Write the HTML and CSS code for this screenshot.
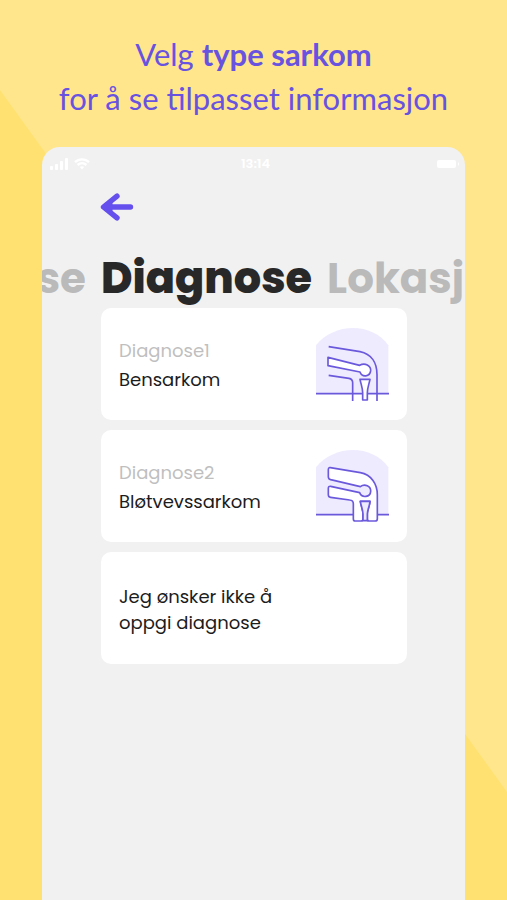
FILE: index.html
```html
<!DOCTYPE html>
<html lang="no">
<head>
<meta charset="utf-8">
<meta name="viewport" content="width=device-width, initial-scale=1">
<title>Diagnose</title>
<link rel="stylesheet" href="styles.css">
</head>
<body>
<div class="page">
  <h1 class="headline">Velg <strong>type sarkom</strong><br>for å se tilpasset informasjon</h1>
  <main class="phone">
    <div class="status">
      <div class="status-left">
        <svg width="18" height="12" viewBox="0 0 18 12" fill="#fff" aria-hidden="true"><rect x="0" y="8" width="3" height="4" rx="1"/><rect x="5" y="6" width="3" height="6" rx="1"/><rect x="10" y="3" width="3" height="9" rx="1"/><rect x="15" y="0" width="3" height="12" rx="1"/></svg>
        <svg width="16" height="12" viewBox="0 0 16 12" fill="none" stroke="#fff" stroke-width="2.4" aria-hidden="true"><path d="M1 4.2C5 .4 11 .4 15 4.2M3.6 7C6.200 4.700 9.800 4.700 12.400 7"/><path d="M8 11.500 5.800 9Q8 7.300 10.200 9Z" fill="#fff" stroke="none"/></svg>
      </div>
      <time class="clock">13:14</time>
      <svg class="battery" width="24" height="10" viewBox="0 0 24 10" fill="#fff" aria-hidden="true"><rect x="0" y="1" width="19" height="8" rx="2"/><path d="M21 3q2 2 0 4z"/></svg>
    </div>
    <button class="back" type="button" aria-label="Tilbake">
      <svg width="34" height="28" viewBox="0 0 34 28" fill="none" stroke="#6550ee" stroke-width="5.400" stroke-linecap="round" stroke-linejoin="round" aria-hidden="true"><path d="M30.500 14H4M17 3.200 3.500 14 17 24.800"/><path d="M11 10.500 6 14l5 3.500z" fill="#6550ee" stroke-width="3"/></svg>
    </button>
    <nav class="steps">
      <a class="step step-prev" href="#forrige">se</a>
      <a class="step step-current" href="#diagnose" aria-current="step">Diagnose</a>
      <a class="step" href="#lokasjon">Lokasj</a>
    </nav>
    <div class="cards">
      <button class="card" type="button">
        <span class="card-text"><span class="label">Diagnose1</span><span>Bensarkom</span></span>
        <svg class="picture" viewBox="33 36 219 219" fill="none" stroke="#6b59dc" stroke-width="5" stroke-linejoin="round" aria-hidden="true">
          <path d="M33 233V88C60 54 102 36 144 36S226 54 250 88V233Z" fill="#eeebff" stroke="none"/>
          <path d="M33 233H252"/>
          <path d="M71 92 165 107C199 114 216 140 216 176V255"/>
          <path d="M71 178 132 187Q143 189 143 200V255"/>
          <path d="M69 124 164 148C180 139 198 149 197 164C195 183 171 185 165 168L69 149Z" fill="#fff"/>
          <path d="M165 190H195C192 205 187 216 187 230V252H173V230C173 216 168 205 165 190Z" fill="#fff"/>
        </svg>
      </button>
      <button class="card" type="button">
        <span class="card-text"><span class="label">Diagnose2</span><span>Bløtvevssarkom</span></span>
        <svg class="picture" viewBox="33 36 219 219" fill="none" stroke="#6b59dc" stroke-width="5" stroke-linejoin="round" aria-hidden="true">
          <path d="M33 230V88C60 54 102 36 144 36S226 54 250 88V230Z" fill="#eeebff" stroke="none"/>
          <path d="M33 230H252"/>
          <path d="M76 89 166 104C199 110 217 138 217 170V242Q217 249 210 249H193Q187 249 187 242V228C187 216 194 204 195 190H166C168 204 174 216 174 228V242Q174 249 167 249H151Q145 249 145 242V197Q145 187 134 186L77 178Q70 177 70 170V151Q70 144 77 145L164 164C171 182 196 177 197 160C198 144 179 136 166 146L77 125Q70 123 70 116V95Q70 88 76 89Z" fill="#fff"/>
          <path d="M166 190H195C194 204 187 216 187 228V248H174V228C174 216 168 204 166 190Z" fill="#eeebff"/>
        </svg>
      </button>
      <button class="card" type="button">
        <span class="card-text">Jeg ønsker ikke å<br>oppgi diagnose</span>
      </button>
    </div>
  </main>
</div>
</body>
</html>
```
FILE: styles.css
```css
* { box-sizing: border-box; }

body { margin: 0; }

.page {
  position: relative;
  display: flex;
  flex-direction: column;
  min-height: 100vh;
  padding: 32px 42px 0;
  background: #ffe68c;
}

/* Darker diagonal half of the backdrop */
.page::before {
  content: "";
  position: absolute;
  inset: 0;
  background: #ffe172;
  clip-path: polygon(0 10%, 100% 88%, 100% 100%, 0 100%);
}

.headline {
  position: relative;
  margin: 0 -20px 27px;
  color: #6852e0;
  font: 400 31px/44px Lato, sans-serif;
  text-align: center;
}

.headline strong { font-weight: 700; }

.phone {
  position: relative;
  flex: 1;
  overflow: hidden;
  border-radius: 18px 18px 0 0;
  background: #f1f1f1;
}

.status {
  display: grid;
  grid-template-columns: 1fr auto 1fr;
  align-items: center;
  height: 34px;
  padding: 0 4px 0 8px;
}

.status-left { display: flex; gap: 6px; }

.clock {
  color: #fff;
  font: 600 13px/16px Poppins, Inter, sans-serif;
}

.battery { justify-self: end; }

.back {
  display: block;
  margin: 12px 0 0 58px;
  padding: 0;
  border: 0;
  background: none;
  cursor: pointer;
}

.back svg { display: block; }

.steps {
  display: grid;
  grid-template-columns: 44px auto 1fr;
  align-items: baseline;
  column-gap: 15px;
  margin-top: 29px;
  white-space: nowrap;
}

.step {
  color: #bababa;
  font: 700 42px/56px Poppins, Inter, sans-serif;
  text-decoration: none;
}

.step-prev { justify-self: end; }

.step-current {
  color: #282828;
  font-size: 43px;
  font-weight: 800;
}

.cards {
  display: grid;
  gap: 10px;
  margin: 1px 58px 0 59px;
}

.card {
  display: flex;
  align-items: center;
  justify-content: space-between;
  min-height: 112px;
  padding: 0 18px;
  border: 0;
  border-radius: 10px;
  background: #fff;
  color: #1c1c1c;
  font: 400 18px/26px Poppins, Inter, sans-serif;
  text-align: left;
  cursor: pointer;
}

.card-text { display: grid; gap: 3px; padding-top: 3px; }

.label { color: #bfbfbf; }

.picture { width: 73px; height: 73px; }
```
